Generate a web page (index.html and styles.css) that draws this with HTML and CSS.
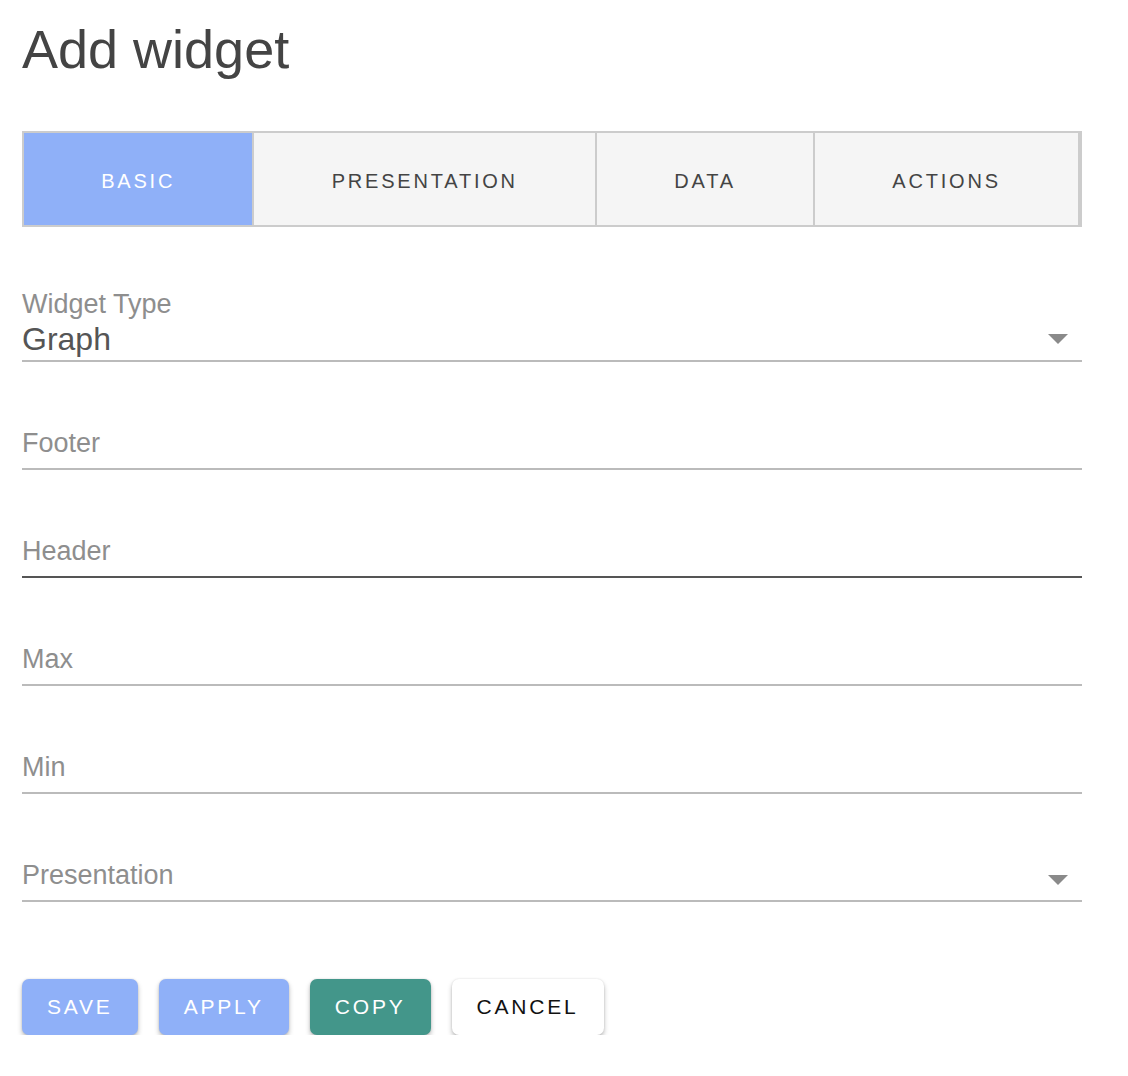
FILE: index.html
```html
<!DOCTYPE html>
<html lang="en">
<head>
<meta charset="UTF-8">
<meta name="viewport" content="width=device-width, initial-scale=1.0">
<title>Add widget</title>
<link rel="stylesheet" href="styles.css">
</head>
<body>
<div class="page">
    <h1 class="title">Add widget</h1>

    <div class="tabs">
        <div class="tab active">BASIC</div>
        <div class="tab">PRESENTATION</div>
        <div class="tab">DATA</div>
        <div class="tab">ACTIONS</div>
    </div>

    <form class="form">
        <!-- Widget type select -->
        <div class="field field-select">
            <div class="label">Widget Type</div>
            <div class="select-row">
                <span class="value">Graph</span>
                <span class="arrow"></span>
            </div>
        </div>

        <div class="field">
            <div class="label">Footer</div>
        </div>
        <div class="field focused">
            <div class="label">Header</div>
        </div>
        <div class="field">
            <div class="label">Max</div>
        </div>
        <div class="field">
            <div class="label">Min</div>
        </div>

        <div class="field field-empty-select">
            <div class="select-row">
                <span class="label">Presentation</span>
                <span class="arrow"></span>
            </div>
        </div>

        <div class="actions">
            <button type="button" class="btn primary">SAVE</button>
            <button type="button" class="btn primary">APPLY</button>
            <button type="button" class="btn copy">COPY</button>
            <button type="button" class="btn plain">CANCEL</button>
        </div>
    </form>
</div>
</body>
</html>
```

FILE: styles.css
```css
body {
    margin: 0;
    font-family: "Liberation Sans", Arial, sans-serif;
    background-color: #fff;
}
.page {
    width: 1060px;
    padding: 23px 0 0 22px;
}
.title {
    margin: 0;
    height: 53px;
    font-size: 54px;
    line-height: 53px;
    font-weight: normal;
    color: #444;
}
.tabs {
    display: flex;
    margin-top: 55px;
    height: 96px;
    box-sizing: border-box;
    border: 2px solid #ccc;
    background-color: #f5f5f5;
}
.tab {
    flex: 1 1 auto;
    display: flex;
    align-items: center;
    justify-content: center;
    padding-top: 4px;
    border-right: 2px solid #ccc;
    font-size: 20px;
    letter-spacing: 2.8px;
    color: #444;
}
.tab.active {
    background-color: #8fb0f8;
    color: #fff;
}
.form {
    margin: 0;
}
.field {
    margin-top: 65px;
    padding-bottom: 9px;
    border-bottom: 2px solid #bbb;
}
.field.focused {
    border-bottom-color: #555;
}
.label {
    font-size: 27px;
    line-height: 32px;
    color: #8e8e8e;
}
.field-select {
    margin-top: 60px;
    padding-bottom: 3px;
}
.field-select .label {
    line-height: 34px;
}
.select-row {
    display: flex;
    align-items: center;
    justify-content: space-between;
    height: 36px;
}
.value {
    font-size: 32px;
    line-height: 36px;
    color: #555;
}
.arrow {
    width: 0;
    height: 0;
    margin-right: 14px;
    border-left: 10px solid transparent;
    border-right: 10px solid transparent;
    border-top: 10px solid #8a8a8a;
}
.field-empty-select {
    padding-bottom: 5px;
}
.field-empty-select .select-row {
    align-items: flex-start;
}
.field-empty-select .label {
    line-height: 32px;
}
.field-empty-select .arrow {
    margin-top: 16px;
}
.actions {
    display: flex;
    gap: 21px;
    margin-top: 77px;
}
.btn {
    height: 56px;
    padding: 0 25px;
    border: none;
    border-radius: 7px;
    font-family: "Liberation Sans", Arial, sans-serif;
    font-size: 21px;
    letter-spacing: 2.8px;
    color: #fff;
    cursor: pointer;
    box-shadow: 0 3px 5px rgba(0,0,0,0.26), 0 0 2px rgba(0,0,0,0.12);
}
.btn.primary {
    background-color: #8fb0f8;
}
.btn.copy {
    background-color: #43968a;
}
.btn.plain {
    background-color: #fff;
    color: #111;
}
```
